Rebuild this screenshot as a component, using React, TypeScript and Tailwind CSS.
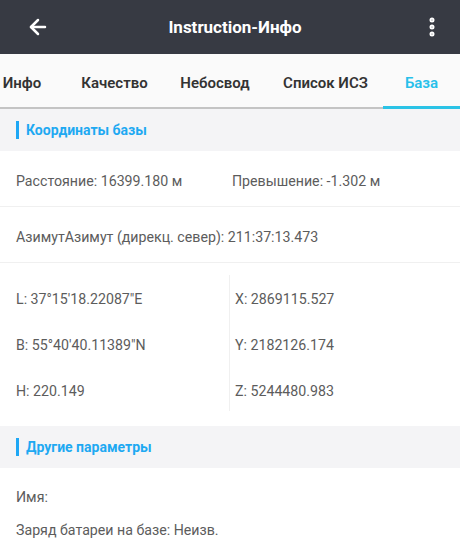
import { ArrowLeft, EllipsisVertical } from "lucide-react";

const tabs = [
    { label: "Инфо", w: "w-[90px]" },
    { label: "Качество", w: "w-[95px]" },
    { label: "Небосвод", w: "w-[106px]" },
    { label: "Список ИСЗ", w: "w-[115px]" },
    { label: "База", w: "w-[77px]", active: true },
];

const SectionTitle = ({ title }: { title: string }) => (
    <div className="flex items-center h-[42px] bg-[#f4f4f6] px-4">
        <span className="w-[3px] h-[18px] bg-[#1ea7f5] mr-[7px]" />
        <span className="text-[14px] font-bold text-[#1ea9f2]">{title}</span>
    </div>
);

const App = () => {
    return (
        <div className="w-[460px] h-[559px] overflow-hidden bg-white text-[14.2px] leading-[20px] text-[#5c5c5c]" style={{ fontFamily: "Roboto, 'Noto Sans', sans-serif" }}>
            <div className="flex items-center justify-between h-[54px] bg-[#373a43] text-white px-[26px]">
                <ArrowLeft size={24} strokeWidth={2.5} />
                <span className="text-[17px] font-bold">Instruction-Инфо</span>
                <EllipsisVertical size={24} strokeWidth={3} className="-mr-[10px]" />
            </div>

            <div className="flex h-[55px] bg-[#fafafa] border-b-2 border-[#c4c4c4] -ml-[23px]">
                {tabs.map((t) => (
                    <div key={t.label} className={`${t.w} shrink-0 flex items-center justify-center pt-[5px] text-[15px] font-semibold relative ${t.active ? "text-[#27c0ea]" : "text-[#333]"}`}>
                        {t.label}
                        {t.active && <span className="absolute left-0 right-0 -bottom-[2px] h-[3px] bg-[#2bc3e6]" />}
                    </div>
                ))}
            </div>

            <SectionTitle title="Координаты базы" />

            <div className="flex items-center h-[56px] pt-[5px] px-4 border-b border-[#f0f0f0]">
                <span className="w-[216px]">Расстояние: 16399.180 м</span>
                <span>Превышение: -1.302 м</span>
            </div>
            <div className="flex items-center h-[56px] pt-[5px] px-4 border-b border-[#f0f0f0]">
                <span>АзимутАзимут (дирекц. север): 211:37:13.473</span>
            </div>

            <div className="grid grid-cols-2 h-[163px]">
                <div className="flex flex-col pl-4 pt-[26px] gap-[26px] relative">
                    <span>L: 37°15'18.22087"E</span>
                    <span>B: 55°40'40.11389"N</span>
                    <span>H: 220.149</span>
                    <span className="absolute right-0 top-[12px] h-[136px] w-px bg-[#f0f0f0]" />
                </div>
                <div className="flex flex-col pl-[5px] pt-[26px] gap-[26px]">
                    <span>X: 2869115.527</span>
                    <span>Y: 2182126.174</span>
                    <span>Z: 5244480.983</span>
                </div>
            </div>

            <SectionTitle title="Другие параметры" />

            <div className="flex flex-col px-4 pt-[19px] gap-[13px]">
                <span>Имя:</span>
                <span>Заряд батареи на базе: Неизв.</span>
            </div>
        </div>
    );
};

export default App;
